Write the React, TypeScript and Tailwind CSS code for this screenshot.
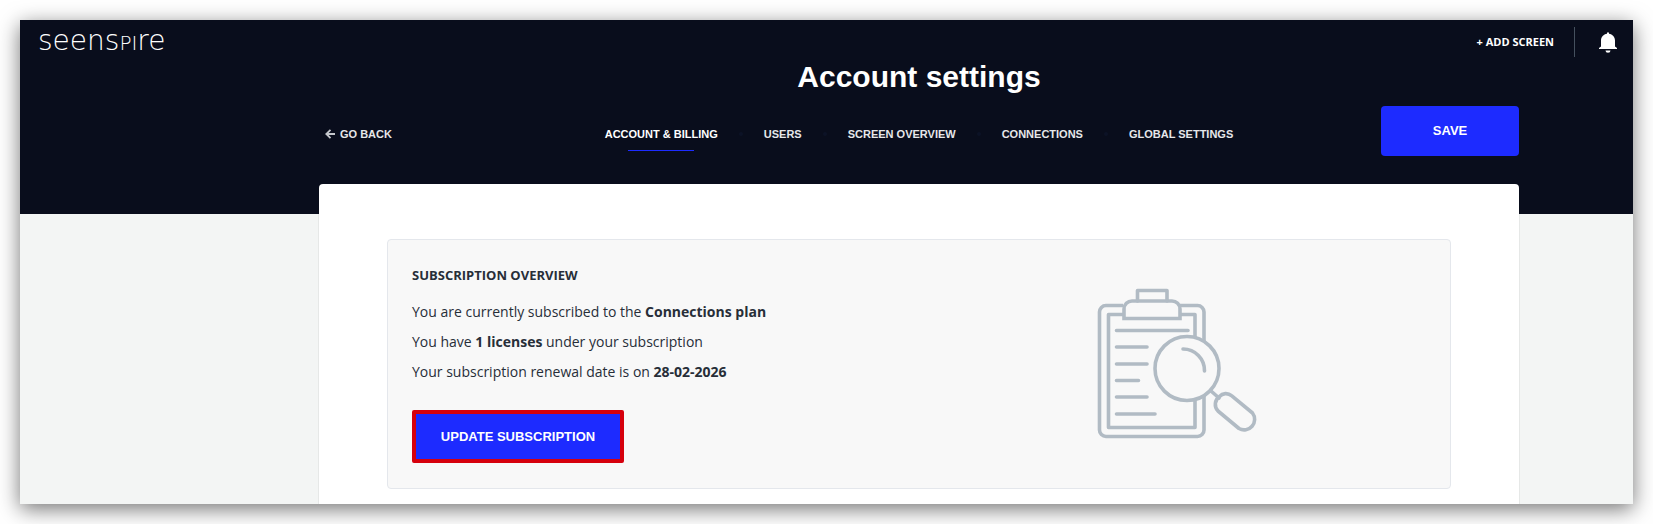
const TABS = ["Users", "Screen overview", "Connections", "Global settings"];

function Clipboard() {
  return (
    <svg width="160" height="152" viewBox="0 0 160 152" fill="none" stroke="#b1bbc4" strokeWidth="3.6" strokeLinecap="round" strokeLinejoin="round" aria-hidden="true">
      <path d="M26 18.500H9a6.500 6.500 0 0 0-6.500 6.500V143a6.500 6.500 0 0 0 6.500 6.500H100.500a6.500 6.500 0 0 0 6.500-6.500V108M83 18.500h17.500a6.500 6.500 0 0 1 6.500 6.500V54" strokeLinecap="butt" />
      <path d="M26 27.500H11.500V140.500H98V112M83 27.500H98V50" strokeLinecap="butt" />
      <path d="M27 31.500V22a8 8 0 0 1 8-8H75a8 8 0 0 1 8 8v9.500z" strokeLinejoin="miter" />
      <path d="M40.500 14V3.500H70V14" />
      <path d="M19.500 43.500H91M19.500 60H50M19.500 77H50M19.500 93.500H41.500M19.500 110H50M19.500 127H58" />
      <circle cx="90" cy="81.500" r="32" />
      <path d="M86 62A21.500 21.500 0 0 1 107.500 84M114 104l8 7" />
      <path d="M122.500 109.500a8.500 8.500 0 0 1 12-.8L155.500 126a10.500 10.500 0 0 1-13.500 15.500L121 124a9.500 9.500 0 0 1 1.500-14.500z" />
    </svg>
  );
}

export default function App() {
  return (
    <div className="p-5 bg-white font-['Open_Sans',sans-serif] text-[#272e38]">
      <div className="bg-[#f3f5f4] shadow-[0_5px_20px_rgba(0,0,0,0.55)]">
        <header className="bg-[#090d1c] text-white h-[194px]">
          <div className="flex h-11 items-center justify-between pl-[18px] pr-4">
            <a href="#" aria-label="seenspire" className="font-['DejaVu_Sans_Light','DejaVu_Sans',sans-serif] text-[28px] leading-8 font-extralight">
              seens<span className="text-[20px] uppercase">pi</span>re
            </a>
            <div className="flex items-center">
              <a href="#" className="text-[11px] font-bold">+ ADD SCREEN</a>
              <span className="ml-5 h-[30px] w-px bg-[#45505e]" />
              <button aria-label="Notifications" className="ml-6">
                <svg width="18" height="21" viewBox="0 0 18 21" fill="white">
                  <path d="M8 1.200a1 1 0 0 1 2 0v.6C13.500 2.300 16 5 16 8.500V14.500L18 16v1H0v-1l2-1.500V8.500C2 5 4.500 2.300 8 1.800zM6.500 18.500h5a2.500 2.300 0 0 1-5 0z" />
                </svg>
              </button>
            </div>
          </div>
          <div className="pl-[185px]">
            <div className="mx-auto max-w-[1200px] pt-px font-['Liberation_Sans',sans-serif]">
              <h1 className="text-center text-[30px] leading-6 font-bold">Account settings</h1>
              <div className="mt-[17px] grid grid-cols-[1fr_auto_1fr] items-center">
                <a href="#" className="flex items-center gap-1 pl-1.5 pt-1.5 text-[11px] font-bold text-[#e6e7ea]">
                  <svg width="11" height="10" viewBox="0 0 11 10" fill="none" stroke="#c4c7cc" strokeWidth="1.8" aria-hidden="true">
                    <path d="M5.500 .8L1.300 5l4.200 4.200M1.300 5H10" />
                  </svg>
                  GO BACK
                </a>
                <nav className="flex items-center pt-1.5 text-[11px] leading-4 font-bold uppercase text-[#e6e7ea]">
                  <a href="#" className="relative text-white">
                    Account &amp; billing
                    <span className="absolute top-6 left-1/2 h-px w-[66px] -translate-x-1/2 bg-[#1d2bff]" />
                  </a>
                  {TABS.map((tab) => (
                    <span key={tab} className="flex items-center">
                      <span className="mx-[21px] size-1 rounded-full bg-[#0c1226]" />
                      <a href="#">{tab}</a>
                    </span>
                  ))}
                </nav>
                <button className="h-[50px] w-[138px] justify-self-end rounded bg-[#1d2bff] text-[13px] font-bold">SAVE</button>
              </div>
            </div>
          </div>
        </header>
        <main className="-mt-[30px] pl-[185px]">
          <div className="mx-auto max-w-[1200px] rounded-t bg-white px-[68px] pt-[55px] pb-[15px] shadow-[0_0_0_1px_rgba(0,0,0,0.05)] [clip-path:inset(0_-1px_0_-1px)]">
            <section className="grid grid-cols-2 rounded border border-[#e4e7ec] bg-[#f8f8f8]">
              <div className="pt-[26px] pb-[25px] pl-6">
                <h2 className="text-[13px] leading-[18px] font-bold">SUBSCRIPTION OVERVIEW</h2>
                <div className="mt-[13px] text-sm leading-[30px]">
                  <p>You are currently subscribed to the <b>Connections plan</b></p>
                  <p>You have <b>1 licenses</b> under your subscription</p>
                  <p>Your subscription renewal date is on <b>28-02-2026</b></p>
                </div>
                <button className="mt-[23px] h-[53px] w-[212px] rounded-xs border-4 border-[#d6000d] bg-[#1d2bff] font-['Liberation_Sans',sans-serif] text-[13px] font-bold text-white">
                  UPDATE SUBSCRIPTION
                </button>
              </div>
              <div className="flex items-center justify-center pr-4 pb-0.5">
                <Clipboard />
              </div>
            </section>
          </div>
        </main>
      </div>
    </div>
  );
}
